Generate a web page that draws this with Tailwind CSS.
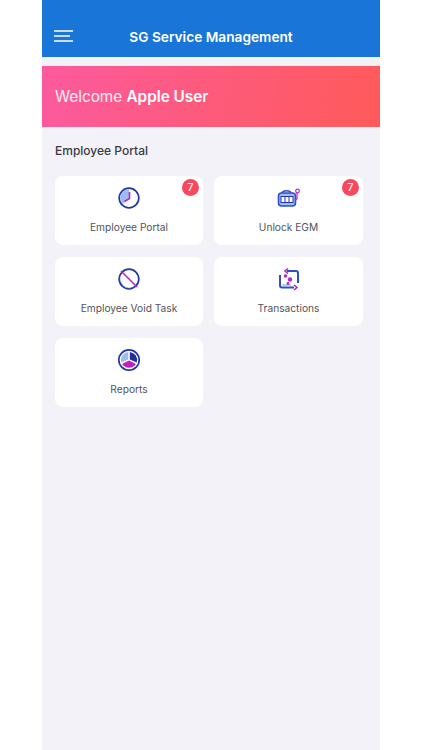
<!DOCTYPE html>
<html><head><meta charset="utf-8"><script src="https://cdn.jsdelivr.net/npm/@tailwindcss/browser@4"></script></head>
<body class="bg-white">
<div class="ml-[42px] w-[338px] h-[750px] bg-[#f2f2f8] overflow-hidden font-['Inter',sans-serif]">
  <header class="h-[57px] bg-[#1976d8] relative flex items-end justify-center pb-[10px]">
    <svg class="absolute left-[12px] top-[30px]" width="19" height="12" viewBox="0 0 19 12" fill="none" stroke="#fff" stroke-width="1.4"><path d="M0 1H19M0 6H16M0 11H19"/></svg>
    <span class="text-white text-[13.7px] leading-[20px] font-semibold">SG Service Management</span>
  </header>
  <div class="mt-[9px] h-[61px] bg-linear-[100deg] from-[#fc5a9e] to-[#ff5a5a] flex items-center pl-[13px] pt-[2px] text-[15.3px] text-white/90">
    <span>Welcome <span class="font-semibold text-white">Apple User</span></span>
  </div>
  <h2 class="mt-[15px] ml-[13px] text-[12px] leading-[18px] font-medium text-[#3a3a44]">Employee Portal</h2>
  <div class="mt-[16px] mx-[13px] grid grid-cols-[148px_149px] gap-x-[11px] gap-y-[12px] w-[308px]">
    <div class="relative h-[69px] bg-white rounded-[8px] flex flex-col items-center pt-[11px]">
      <svg width="22" height="22" viewBox="0 0 22 22"><circle cx="11" cy="11" r="9.8" fill="#fff" stroke="#2536a8" stroke-width="1.7"/><path d="M11 2.2A8.8 8.8 0 0 0 4.8 17.2L11 11Z" fill="#9dbcf2"/><path d="M11.5 5V11.5L6.5 14.5" fill="none" stroke="#b32ac4" stroke-width="1.6"/></svg>
      <span class="mt-[10px] text-[10.2px] leading-[16px] text-[#52525c]">Employee Portal</span>
      <span class="absolute right-[4px] top-[3px] w-[17px] h-[17px] rounded-full bg-[#f9475c] text-white text-[10.5px] font-medium flex items-center justify-center">7</span>
    </div>
    <div class="relative h-[69px] bg-white rounded-[8px] flex flex-col items-center pt-[11px]">
      <svg width="24" height="22" viewBox="0 0 24 22" fill="none"><rect x="1.5" y="6" width="17" height="13" rx="3" fill="#9dbcf2" stroke="#2f4fc8" stroke-width="1.6"/><path d="M5 6C6 3 13 3 14 6" stroke="#2f4fc8" stroke-width="1.5"/><rect x="4" y="9.5" width="12" height="6" fill="#fff" stroke="#2536a8"/><path d="M8 9.5V15.5M12 9.5V15.5" stroke="#2536a8"/><path d="M20 6V12L18.5 13" stroke="#b32ac4" stroke-width="1.2"/><circle cx="20.5" cy="4" r="1.8" fill="#fff" stroke="#b32ac4" stroke-width="1.2"/></svg>
      <span class="mt-[10px] text-[10.2px] leading-[16px] text-[#52525c]">Unlock EGM</span>
      <span class="absolute right-[4px] top-[3px] w-[17px] h-[17px] rounded-full bg-[#f9475c] text-white text-[10.5px] font-medium flex items-center justify-center">7</span>
    </div>
    <div class="h-[69px] bg-white rounded-[8px] flex flex-col items-center pt-[10px]">
      <svg width="24" height="24" viewBox="0 0 24 24" fill="none"><circle cx="12" cy="12" r="9.8" stroke="#2536a8" stroke-width="1.7"/><path d="M4.5 9A9 9 0 0 0 14 21A8.5 8.5 0 0 1 4.5 9Z" fill="#9dbcf2"/><path d="M4 4L20 20" stroke="#b32ac4" stroke-width="1.6"/></svg>
      <span class="mt-[9px] text-[10.2px] leading-[16px] text-[#52525c]">Employee Void Task</span>
    </div>
    <div class="h-[69px] bg-white rounded-[8px] flex flex-col items-center pt-[10px]">
      <svg width="24" height="24" viewBox="0 0 24 24" fill="none"><path d="M10 4H19Q21 4 21 6V16" stroke="#2f4fc8" stroke-width="2"/><path d="M3 8V18.5Q3 20.5 5 20.5H17" stroke="#2f4fc8" stroke-width="2"/><path d="M6 17.5V18H14" stroke="#9dbcf2" stroke-width="1.6"/><path d="M11 1.5L8 4L11 6.5M17 18L20 20.5L17 23" stroke="#b32ac4" stroke-width="1.6"/><circle cx="8.5" cy="9" r="1.8" fill="#b32ac4"/><circle cx="13" cy="12.5" r="2.2" fill="#b32ac4"/><circle cx="11" cy="16.5" r="1.4" fill="#b32ac4"/></svg>
      <span class="mt-[9px] text-[10.2px] leading-[16px] text-[#52525c]">Transactions</span>
    </div>
    <div class="h-[69px] bg-white rounded-[8px] flex flex-col items-center pt-[10px]">
      <svg width="24" height="24" viewBox="0 0 24 24"><circle cx="12" cy="12" r="10.2" fill="#fff" stroke="#2536a8" stroke-width="1.7"/><path d="M11.3 3.9A8.3 8.3 0 0 0 4.2 14.6L11.3 11.5Z" fill="#9dbcf2"/><path d="M12.8 3.9A8.3 8.3 0 0 1 19.8 14.6L12.8 11.5Z" fill="#1f2f9c"/><path d="M5 16L12 12.6L19 16A8.3 8.3 0 0 1 5 16Z" fill="#c01fc0"/></svg>
      <span class="mt-[9px] text-[10.2px] leading-[16px] text-[#52525c]">Reports</span>
    </div>
  </div>
</div>
</body></html>
